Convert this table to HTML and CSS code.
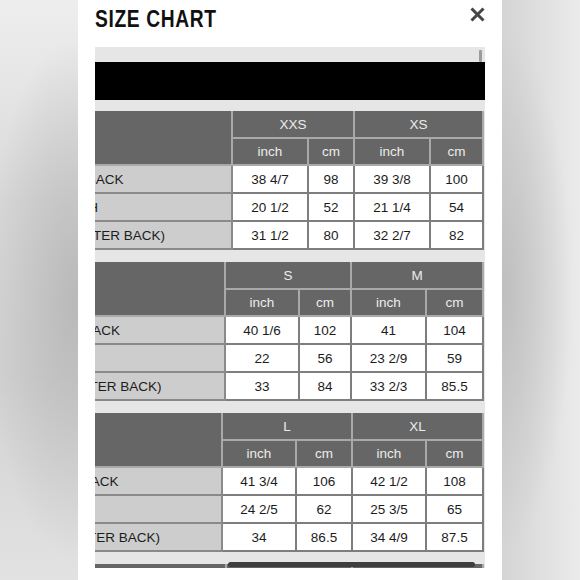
FILE: index.html
```html
<!DOCTYPE html>
<html lang="en">
<head>
<meta charset="utf-8">
<title>Size Chart</title>
<link rel="stylesheet" href="styles.css">
</head>
<body>
<div class="backdrop backdrop-left"></div>
<main class="panel">
  <header class="panel-head">
    <h1 class="title">SIZE CHART</h1>
    <button class="close" aria-label="Close">
      <svg width="15" height="15" viewBox="0 0 15 15"><path d="M1.5 1.5 L13.5 13.5 M13.5 1.5 L1.5 13.5" stroke="#454545" stroke-width="3" fill="none"/></svg>
    </button>
  </header>
  <section class="viewport">
    <div class="banner"></div>

    <div class="chart chart-1">
      <div class="cell head label span2"></div>
      <div class="cell head span-size">XXS</div>
      <div class="cell head span-size">XS</div>
      <div class="cell head">inch</div><div class="cell head">cm</div><div class="cell head">inch</div><div class="cell head">cm</div>
      <div class="cell label">BODY LENGTH BACK</div><div class="cell">38 4/7</div><div class="cell">98</div><div class="cell">39 3/8</div><div class="cell">100</div>
      <div class="cell label">BODY WIDTH</div><div class="cell">20 1/2</div><div class="cell">52</div><div class="cell">21 1/4</div><div class="cell">54</div>
      <div class="cell label">SLEEVE LENGTH (CENTER BACK)</div><div class="cell">31 1/2</div><div class="cell">80</div><div class="cell">32 2/7</div><div class="cell">82</div>
    </div>

    <div class="chart chart-2">
      <div class="cell head label span2"></div>
      <div class="cell head span-size">S</div>
      <div class="cell head span-size">M</div>
      <div class="cell head">inch</div><div class="cell head">cm</div><div class="cell head">inch</div><div class="cell head">cm</div>
      <div class="cell label">BODY LENGTH BACK</div><div class="cell">40 1/6</div><div class="cell">102</div><div class="cell">41</div><div class="cell">104</div>
      <div class="cell label">BODY WIDTH</div><div class="cell">22</div><div class="cell">56</div><div class="cell">23 2/9</div><div class="cell">59</div>
      <div class="cell label">SLEEVE LENGTH (CENTER BACK)</div><div class="cell">33</div><div class="cell">84</div><div class="cell">33 2/3</div><div class="cell">85.5</div>
    </div>

    <div class="chart chart-3">
      <div class="cell head label span2"></div>
      <div class="cell head span-size">L</div>
      <div class="cell head span-size">XL</div>
      <div class="cell head">inch</div><div class="cell head">cm</div><div class="cell head">inch</div><div class="cell head">cm</div>
      <div class="cell label">BODY LENGTH BACK</div><div class="cell">41 3/4</div><div class="cell">106</div><div class="cell">42 1/2</div><div class="cell">108</div>
      <div class="cell label">BODY WIDTH</div><div class="cell">24 2/5</div><div class="cell">62</div><div class="cell">25 3/5</div><div class="cell">65</div>
      <div class="cell label">SLEEVE LENGTH (CENTER BACK)</div><div class="cell">34</div><div class="cell">86.5</div><div class="cell">34 4/9</div><div class="cell">87.5</div>
    </div>

    <div class="chart chart-4">
      <div class="cell head label"></div>
      <div class="cell head"></div>
      <div class="cell head"></div>
    </div>

    <div class="vbar"></div>
    <div class="hbar"></div>
  </section>
</main>
<div class="backdrop backdrop-right"></div>
</body>
</html>
```
FILE: styles.css
```css
* { box-sizing: border-box; }
html, body { margin: 0; padding: 0; }
body {
  width: 580px;
  height: 580px;
  overflow: hidden;
  display: grid;
  grid-template-columns: 78px 424px 78px;
  font-family: "Liberation Sans", Arial, sans-serif;
  background: #fff;
}
.backdrop-left {
  background:
    radial-gradient(ellipse 90px 260px at 75px 300px, rgba(180,180,180,0.85), rgba(180,180,180,0) 100%),
    linear-gradient(180deg, #eeeeee 0%, #d9d9d9 35%, #d2d2d2 65%, #e2e2e2 100%);
}
.backdrop-right {
  background:
    radial-gradient(ellipse 70px 260px at 0px 290px, rgba(185,185,185,0.8), rgba(185,185,185,0) 100%),
    linear-gradient(90deg, #d4d4d4 0%, #e4e4e4 70%, #ebebeb 100%);
}
.panel {
  background: #fff;
  padding: 0 17px;
  display: flex;
  flex-direction: column;
}
.panel-head {
  height: 47px;
  display: flex;
  justify-content: space-between;
  align-items: flex-start;
}
.title {
  margin: 7px 0 0;
  font-family: "Liberation Sans", Arial, sans-serif;
  font-weight: 700;
  font-size: 24px;
  line-height: 24px;
  letter-spacing: 0.8px;
  color: #111;
  transform: scaleX(0.8);
  transform-origin: left center;
  white-space: nowrap;
}
.close {
  margin: 7px 0 0;
  padding: 0;
  border: 0;
  background: none;
  width: 15px;
  height: 15px;
  display: block;
}
.close svg { display: block; }
.viewport {
  position: relative;
  width: 390px;
  height: 521px;
  overflow: hidden;
  background: #e6e6e6;
  padding-top: 15px;
}
.banner {
  height: 38px;
  background: #000;
  margin-bottom: 11px;
}
.chart {
  display: grid;
  width: 607px;
  margin-left: -216px;
  margin-bottom: 12px;
  grid-template-rows: 28px 27px 28px 28px 28px;
  font-size: 13.5px;
  color: #1c1c1c;
}
.chart-1 { grid-template-columns: 354px 76px 46px 76px 53px; }
.chart-2 { grid-template-columns: 347px 74px 52px 75px 57px; }
.chart-3 { grid-template-columns: 344px 74px 56px 74px 57px; }
.chart-4 { grid-template-columns: 348px 126px 131px; grid-template-rows: 28px; }
.cell {
  display: flex;
  align-items: center;
  justify-content: center;
  white-space: nowrap;
  background: #fff;
  border-right: 2px solid #7e7e7e;
  border-bottom: 2px solid #7e7e7e;
}
.cell.label {
  background: #cdcdcd;
  border-right-color: #8a8a8a;
  border-bottom-color: #8a8a8a;
}
.cell.head {
  background: #666666;
  color: #ececec;
  border-right-color: #a9a9a9;
  border-bottom-color: #a9a9a9;
}
.span2 { grid-row: span 2; }
.span-size { grid-column: span 2; }
.vbar {
  position: absolute;
  top: 3px;
  right: 3px;
  width: 3px;
  height: 12px;
  border-radius: 1px;
  background: #9c9c9c;
}
.hbar {
  position: absolute;
  left: 133px;
  bottom: 1px;
  width: 247px;
  height: 5px;
  border-radius: 3px;
  background: #3e3e3e;
}
```
